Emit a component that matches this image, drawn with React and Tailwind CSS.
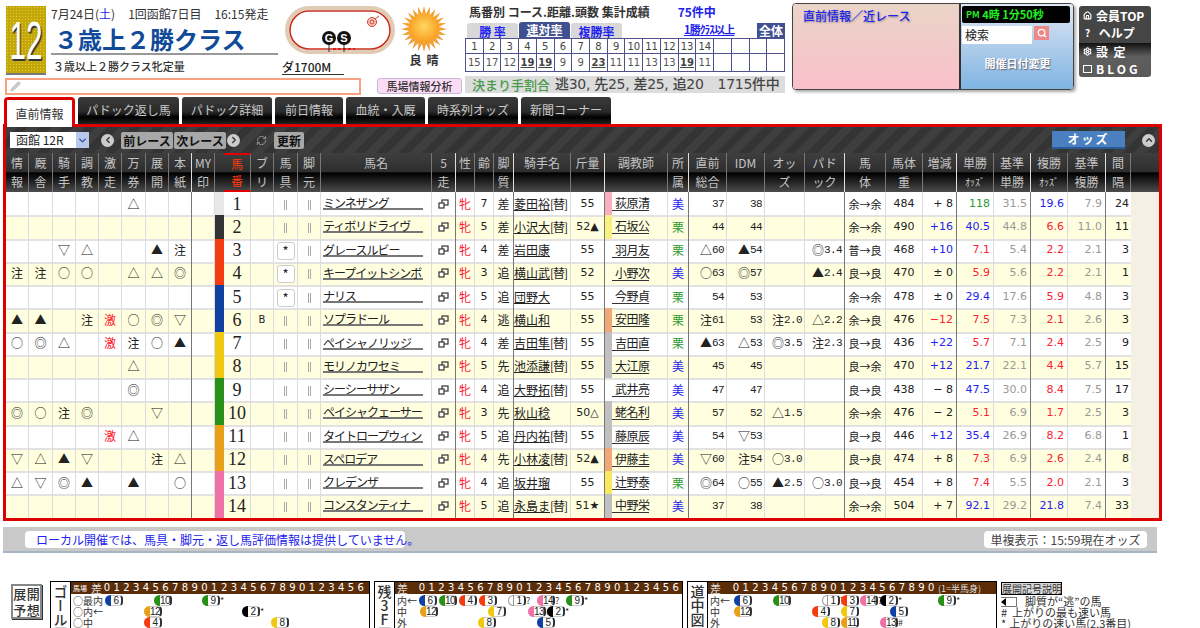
import { Search, Home, Settings, RefreshCw, ChevronLeft, ChevronRight, ChevronUp, ChevronDown, Pencil } from 'lucide-react';

const COLS = 'grid grid-cols-[23px_24px_23px_23px_23px_24px_23px_23px_23px_9px_27px_23px_24px_23px_111px_24px_19px_19px_20px_57px_34px_63px_21px_38px_38px_40px_40px_41px_37px_34px_37px_37px_37px_38px_25px_1fr]';
const NUM = "[font-family:'DejaVu_Sans',sans-serif]";
const MONO = "[font-family:'Liberation_Mono',monospace] text-[11px] tracking-[-0.6px]";

const HEADERS = [
  ['情', '報'], ['厩', '舎'], ['騎', '手'], ['調', '教'], ['激', '走'], ['万', '券'], ['展', '開'], ['本', '紙'], ['MY', '印'], ['', ''],
  ['馬', '番'], ['ブ', 'リ'], ['馬', '具'], ['脚', '元'], ['馬名', ''], ['5', '走'], ['性', ''], ['齢', ''], ['脚', '質'], ['騎手名', ''], ['斤量', ''],
  ['調教師', ''], ['所', '属'], ['直前', '総合'], ['IDM', ''], ['オッ', 'ズ'], ['パド', 'ック'], ['馬', '体'], ['馬体', '重'], ['増減', ''],
  ['単勝', 'ｵｯｽﾞ'], ['基準', '単勝'], ['複勝', 'ｵｯｽﾞ'], ['基準', '複勝'], ['間', '隔'], ['', ''],
];
const DARK = [7, 15, 18, 20, 22, 26, 29, 31, 33];
const FRAMES = ['bg-[#e8e8e8]', 'bg-[#333333]', 'bg-[#f43c10]', 'bg-[#f43c10]', 'bg-[#1040a0]', 'bg-[#1040a0]', 'bg-[#f0c810]', 'bg-[#f0c810]', 'bg-[#289018]', 'bg-[#289018]', 'bg-[#e8a018]', 'bg-[#e8a018]', 'bg-[#f070a8]', 'bg-[#f070a8]'];
const BARS = ['bg-[#f8b0c0]', 'bg-[#f8f080]', '', '', '', 'bg-[#f0a878]', 'bg-[#c0c0c0]', 'bg-[#c0c0c0]', '', 'bg-[#c0c0c0]', 'bg-[#c0c0c0]', 'bg-[#f0a878]', 'bg-[#f8e860]', 'bg-[#c0c0c0]'];

const HORSES = [
  { marks: ['', '', '', '', '', '△', '', ''], name: 'ミンネザング', age: 7, leg: '差', jockey: '菱田裕', sub: 1, kin: '55', trainer: '荻原清', home: '美', total: '37', idm: '38', odds: '', pad: '', body: '余→余', weight: 484, diff: '+ 8', dc: 'k', win: '118', wc: 'g', bw: '31.5', place: '19.6', pc: 'b', bp: '7.9', gap: 24 },
  { marks: ['', '', '', '', '', '', '', ''], name: 'ティボリドライヴ', age: 5, leg: '差', jockey: '小沢大', sub: 1, kin: '52▲', trainer: '石坂公', home: '栗', total: '44', idm: '44', odds: '', pad: '', body: '余→余', weight: 490, diff: '+16', dc: 'b', win: '40.5', wc: 'b', bw: '44.8', place: '6.6', pc: 'r', bp: '11.0', gap: 11 },
  { marks: ['', '', '▽', '△', '', '', '▲', '注'], name: 'グレースルビー', age: 4, leg: '差', jockey: '岩田康', kin: '55', trainer: '羽月友', home: '栗', total: '△60', idm: '▲54', odds: '', pad: '◎3.4', body: '普→良', weight: 468, diff: '+10', dc: 'b', win: '7.1', wc: 'r', bw: '5.4', place: '2.2', pc: 'r', bp: '2.1', gap: 3, gear: 1 },
  { marks: ['注', '注', '○', '○', '', '△', '△', '◎'], name: 'キープイットシンボ', age: 3, leg: '追', jockey: '横山武', sub: 1, kin: '52', trainer: '小野次', home: '美', total: '○63', idm: '◎57', odds: '', pad: '▲2.4', body: '良→良', weight: 470, diff: '± 0', dc: 'k', win: '5.9', wc: 'r', bw: '5.6', place: '2.2', pc: 'r', bp: '2.1', gap: 1, gear: 1 },
  { marks: ['', '', '', '', '', '', '', ''], name: 'ナリス', age: 5, leg: '追', jockey: '団野大', kin: '55', trainer: '今野貞', home: '栗', total: '54', idm: '53', odds: '', pad: '', body: '余→余', weight: 478, diff: '± 0', dc: 'k', win: '29.4', wc: 'b', bw: '17.6', place: '5.9', pc: 'r', bp: '4.8', gap: 3, gear: 1 },
  { marks: ['▲', '▲', '', '注', '激', '○', '◎', '▽'], name: 'ソプラドール', age: 4, leg: '逃', jockey: '横山和', kin: '55', trainer: '安田隆', home: '栗', total: '注61', idm: '53', odds: '注2.0', pad: '△2.2', body: '余→良', weight: 476, diff: '−12', dc: 'r', win: '7.5', wc: 'r', bw: '7.3', place: '2.1', pc: 'r', bp: '2.6', gap: 3, blink: 'B' },
  { marks: ['○', '◎', '△', '', '激', '注', '○', '▲'], name: 'ペイシャノリッジ', age: 4, leg: '差', jockey: '吉田隼', sub: 1, kin: '55', trainer: '吉田直', home: '栗', total: '▲63', idm: '△53', odds: '◎3.5', pad: '注2.3', body: '良→良', weight: 436, diff: '+22', dc: 'b', win: '5.7', wc: 'r', bw: '7.1', place: '2.4', pc: 'r', bp: '2.5', gap: 9 },
  { marks: ['', '', '', '', '', '△', '', ''], name: 'モリノカワセミ', age: 5, leg: '先', jockey: '池添謙', sub: 1, kin: '55', trainer: '大江原', home: '美', total: '45', idm: '45', odds: '', pad: '', body: '良→余', weight: 470, diff: '+12', dc: 'b', win: '21.7', wc: 'b', bw: '22.1', place: '4.4', pc: 'r', bp: '5.7', gap: 15 },
  { marks: ['', '', '', '', '', '◎', '', ''], name: 'シーシーサザン', age: 4, leg: '追', jockey: '大野拓', sub: 1, kin: '55', trainer: '武井亮', home: '美', total: '47', idm: '47', odds: '', pad: '', body: '良→良', weight: 438, diff: '− 8', dc: 'k', win: '47.5', wc: 'b', bw: '30.0', place: '8.4', pc: 'r', bp: '7.5', gap: 17 },
  { marks: ['◎', '○', '注', '◎', '', '', '▽', ''], name: 'ペイシャクェーサー', age: 3, leg: '先', jockey: '秋山稔', kin: '50△', trainer: '蛯名利', home: '美', total: '57', idm: '52', odds: '△1.5', pad: '', body: '余→余', weight: 476, diff: '− 2', dc: 'k', win: '5.1', wc: 'r', bw: '6.9', place: '1.7', pc: 'r', bp: '2.5', gap: 3 },
  { marks: ['', '', '', '', '激', '△', '', ''], name: 'タイトロープウィン', age: 5, leg: '追', jockey: '丹内祐', sub: 1, kin: '55', trainer: '藤原辰', home: '美', total: '54', idm: '▽53', odds: '', pad: '', body: '良→良', weight: 446, diff: '+12', dc: 'b', win: '35.4', wc: 'b', bw: '26.9', place: '8.2', pc: 'r', bp: '6.8', gap: 1 },
  { marks: ['▽', '△', '▲', '▽', '', '', '注', '△'], name: 'スペロデア', age: 4, leg: '先', jockey: '小林凌', sub: 1, kin: '52▲', trainer: '伊藤圭', home: '美', total: '▽60', idm: '注54', odds: '○3.0', pad: '', body: '良→良', weight: 474, diff: '+ 8', dc: 'k', win: '7.3', wc: 'r', bw: '6.9', place: '2.6', pc: 'r', bp: '2.4', gap: 8 },
  { marks: ['△', '▽', '◎', '▲', '', '▲', '', '○'], name: 'クレデンザ', age: 4, leg: '追', jockey: '坂井瑠', kin: '55', trainer: '辻野泰', home: '栗', total: '◎64', idm: '○55', odds: '▲2.5', pad: '○3.0', body: '良→良', weight: 454, diff: '+ 8', dc: 'k', win: '7.4', wc: 'r', bw: '5.5', place: '2.0', pc: 'r', bp: '2.1', gap: 3 },
  { marks: ['', '', '', '', '', '', '', ''], name: 'コンスタンティナ', age: 5, leg: '追', jockey: '永島ま', sub: 1, kin: '51★', trainer: '中野栄', home: '美', total: '37', idm: '38', odds: '', pad: '', body: '余→余', weight: 504, diff: '+ 7', dc: 'k', win: '92.1', wc: 'b', bw: '29.2', place: '21.8', pc: 'b', bp: '7.4', gap: 33 },
];
const TONE = { k: 'text-[#222]', b: 'text-[#2222ee]', r: 'text-[#ff2030]', g: 'text-[#2f9a2f]' };

function WindowIcon() {
  return (
    <svg width="11" height="10" viewBox="0 0 11 10" fill="none" stroke="#333" strokeWidth="1.2">
      <rect x="4" y="1" width="6" height="5" />
      <rect x="1" y="4" width="5" height="5" fill="#fff" />
    </svg>
  );
}

function Bars() {
  return <span className="w-[3px] h-[10px] border-x border-[#aaa]" />;
}

// the mark in front of a figure is a full-size CJK glyph, the figure stays narrow
function Figure({ v }) {
  if (!v) return null;
  const mark = /^[0-9]/.test(v) ? '' : v[0];
  return (
    <>
      {mark && <span className="text-[12px] tracking-normal [font-family:'Noto_Sans_CJK_JP',sans-serif]">{mark}</span>}
      <span className={MONO}>{mark ? v.slice(1) : v}</span>
    </>
  );
}

function Cell({ i, className = '', children }) {
  const edge = DARK.includes(i) ? 'border-r-[#777]' : 'border-r-[#dcdcdc]';
  return (
    <div className={`flex items-center border-r border-b-2 border-b-[#e2e2e2] min-w-0 ${edge} ${className}`}>
      {children}
    </div>
  );
}

function Row({ h, n }) {
  const bg = n % 2 === 0 ? 'bg-[#ffffdf]' : 'bg-white';
  return (
    <div className={`${COLS} h-[23.25px] text-[12px] leading-[14px] text-[#222] ${bg}`}>
      {h.marks.map((m, i) => (
        <Cell key={i} i={i} className={`justify-center ${m === '激' ? 'text-[#ff2030]' : ''}`}>{m}</Cell>
      ))}
      <Cell i={8} />
      <div className={FRAMES[n - 1]} />
      <Cell i={10} className="justify-center text-[18px] leading-[18px] [font-family:'Liberation_Serif',serif]">{n}</Cell>
      <Cell i={11} className={`justify-center text-[10px] ${NUM}`}>{h.blink}</Cell>
      <Cell i={12} className="justify-center pt-[2px]">
        {h.gear ? (
          <span className="w-[18px] h-[18px] bg-white border border-[#ccc] rounded-[3px] flex items-center justify-center text-[13px]">*</span>
        ) : <Bars />}
      </Cell>
      <Cell i={13} className="justify-center pt-[2px]"><Bars /></Cell>
      <Cell i={14} className="pl-[2px] !items-start">
        <span className="w-[100px] h-[18px] border-b-2 border-[#777] leading-[21px] text-[12px] tracking-[-1px] whitespace-nowrap">{h.name}</span>
      </Cell>
      <Cell i={15} className="justify-center"><WindowIcon /></Cell>
      <Cell i={16} className="justify-center text-[#ff2030]">牝</Cell>
      <Cell i={17} className={`justify-center text-[11px] ${NUM}`}>{h.age}</Cell>
      <Cell i={18} className="justify-center">{h.leg}</Cell>
      <Cell i={19} className="whitespace-nowrap">
        <span className="underline">{h.jockey}</span>{h.sub ? <span className="tracking-[-1px]">[替]</span> : null}
      </Cell>
      <Cell i={20} className={`justify-center text-[11px] ${NUM}`}>{h.kin}</Cell>
      <Cell i={21} className="!items-start">
        <div className={`w-[7px] h-[23.25px] shrink-0 ${BARS[n - 1]}`} />
        <span className="mt-[1px] w-[37px] h-[18px] leading-[19px] border-b border-[#333] pl-[3px] whitespace-nowrap text-[12px] tracking-[-0.5px]">{h.trainer}</span>
      </Cell>
      <Cell i={22} className={`justify-center ${h.home === '美' ? 'text-[#2222ee]' : 'text-[#2f9a2f]'}`}>{h.home}</Cell>
      <Cell i={23} className="justify-end pr-[2px]"><Figure v={h.total} /></Cell>
      <Cell i={24} className="justify-end pr-[2px]"><Figure v={h.idm} /></Cell>
      <Cell i={25} className="justify-end pr-[2px]"><Figure v={h.odds} /></Cell>
      <Cell i={26} className="justify-end pr-[2px]"><Figure v={h.pad} /></Cell>
      <Cell i={27} className="justify-center text-[11px] whitespace-nowrap">{h.body}</Cell>
      <Cell i={28} className={`justify-center text-[11px] ${NUM}`}>{h.weight}</Cell>
      <Cell i={29} className={`justify-end pr-[3px] text-[11px] whitespace-pre ${NUM} ${TONE[h.dc]}`}>{h.diff}</Cell>
      <Cell i={30} className={`justify-end pr-[3px] text-[11px] ${NUM} ${TONE[h.wc]}`}>{h.win}</Cell>
      <Cell i={31} className={`justify-end pr-[3px] text-[11px] text-[#999] ${NUM}`}>{h.bw}</Cell>
      <Cell i={32} className={`justify-end pr-[3px] text-[11px] ${NUM} ${TONE[h.pc]}`}>{h.place}</Cell>
      <Cell i={33} className={`justify-end pr-[3px] text-[11px] text-[#999] ${NUM}`}>{h.bp}</Cell>
      <div className={`flex items-center justify-end pr-[2px] text-[11px] border-b-2 border-b-[#e2e2e2] ${NUM}`}>{h.gap}</div>
      <div className="bg-[#f4f1e4]" />
    </div>
  );
}

function HeaderRow() {
  return (
    <div className={`${COLS} h-[39px] text-[12px] leading-[19px] text-[#c4c4c4] bg-[linear-gradient(#3e3e3e_0,#2e2e2e_48%,#000_51%,#4c4c4c_100%)]`}>
      {HEADERS.map(([a, b], i) => {
        const edge = DARK.includes(i) ? 'border-r-[#ddd]' : i === 9 ? 'border-r-transparent' : 'border-r-[#777]';
        const hot = i === 10 ? 'text-[#ff3a10] border-y-2 border-[#e00000]' : '';
        return (
          <div key={i} className={`flex flex-col items-center border-r whitespace-nowrap ${edge} ${hot} ${i === 35 ? 'border-r-0' : ''}`}>
            <span className={i === 10 ? 'h-[17px] leading-[17px]' : 'h-[19px]'}>{a}</span>
            <span className={`${i === 10 ? 'h-[17px] leading-[17px]' : 'h-[19px]'} ${b === 'ｵｯｽﾞ' ? 'text-[10px] text-[#ccc]' : ''}`}>{b}</span>
          </div>
        );
      })}
    </div>
  );
}

function Toolbar() {
  const btn = 'h-[17px] bg-[#a8a8a8] rounded-[2px] text-[12px] leading-[17px] text-center text-[#111] font-bold whitespace-nowrap';
  const round = 'w-[13px] h-[13px] rounded-full bg-[#ccc] flex items-center justify-center text-[#333]';
  return (
    <div className="h-[26px] flex items-center pl-[4px] bg-[repeating-linear-gradient(135deg,#3e3e3e_0,#3e3e3e_8px,#343434_8px,#343434_16px)]">
      <div className="w-[79px] h-[16px] bg-white flex items-center justify-between pl-[6px] text-[12px] text-[#222]">
        函館 12R
        <span className="w-[13px] h-full bg-[#b8c8ec] flex items-center justify-center text-[#3050a0]"><ChevronDown size={11} strokeWidth={3} /></span>
      </div>
      <span className={`ml-[12px] ${round}`}><ChevronLeft size={10} strokeWidth={3} /></span>
      <span className={`ml-[7px] w-[52px] ${btn}`}>前レース</span>
      <span className={`ml-[1px] w-[52px] ${btn}`}>次レース</span>
      <span className={`ml-[1px] ${round}`}><ChevronRight size={10} strokeWidth={3} /></span>
      <RefreshCw size={11} className="ml-[16px] text-[#999]" />
      <span className={`ml-[7px] w-[30px] ${btn}`}>更新</span>
      <div className="ml-auto w-[73px] h-[18px] bg-[#4a80c0] border-b-2 border-[#2a5a98] text-white text-[12px] font-bold leading-[16px] text-center tracking-[2px]">オッズ</div>
      <span className={`ml-[17px] mr-[4px] ${round}`}><ChevronUp size={10} strokeWidth={3} /></span>
    </div>
  );
}

const TABS = [
  ['パドック返し馬', 'w-[101px]'],
  ['パドック詳細', 'w-[90px]'],
  ['前日情報', 'w-[68px]'],
  ['血統・入厩', 'w-[79px]'],
  ['時系列オッズ', 'w-[90px]'],
  ['新聞コーナー', 'w-[90px]'],
];

function Tabs() {
  return (
    <div className="h-[27px] flex items-start pl-[4px] gap-[3px]">
      <div className="relative z-10 w-[71px] h-[30px] bg-white border-[3px] border-b-0 border-[#dd0000] rounded-t-[4px] text-[12px] text-[#333] text-center leading-[28px]">直前情報</div>
      {TABS.map(([t, w]) => (
        <div key={t} className={`${w} h-[27px] rounded-t-[3px] bg-[linear-gradient(#3a3a3a_0,#2a2a2a_55%,#000_75%,#222_100%)] text-[#c8c8c8] text-[12px] text-center leading-[26px]`}>{t}</div>
      ))}
    </div>
  );
}

function Sun() {
  const pts = [];
  for (let i = 0; i < 48; i++) {
    const r = i % 2 === 0 ? 23 : 15;
    const a = (i / 48) * Math.PI * 2;
    pts.push(`${(23 + r * Math.cos(a)).toFixed(1)},${(23 + r * Math.sin(a)).toFixed(1)}`);
  }
  return (
    <svg width="46" height="46" viewBox="0 0 46 46">
      <defs>
        <radialGradient id="sun" cx="50%" cy="45%" r="55%">
          <stop offset="0%" stopColor="#ffd860" />
          <stop offset="55%" stopColor="#f8a428" />
          <stop offset="100%" stopColor="#e09a50" />
        </radialGradient>
      </defs>
      <polygon points={pts.join(' ')} fill="url(#sun)" />
    </svg>
  );
}

function Track() {
  return (
    <svg width="110" height="50" viewBox="0 0 110 50" className="shrink-0">
      <rect x="2" y="2" width="106" height="44" rx="22" fill="#fff" stroke="#e0ccb4" strokeWidth="4" />
      <rect x="5" y="5" width="100" height="38" rx="19" fill="#fff" stroke="#c83020" strokeWidth="1.6" />
      <line x1="48" y1="43" x2="70" y2="43" stroke="#e02020" strokeWidth="2" strokeDasharray="3 2" />
      <line x1="44" y1="38" x2="44" y2="46" stroke="#333" />
      <line x1="59" y1="38" x2="59" y2="46" stroke="#333" />
      <circle cx="44" cy="32" r="7" fill="#111" />
      <circle cx="59" cy="32" r="7" fill="#111" />
      <text x="44" y="36" textAnchor="middle" fontSize="11" fontWeight="700" fill="#fff" fontFamily="Liberation Sans">G</text>
      <text x="59" y="36" textAnchor="middle" fontSize="11" fontWeight="700" fill="#fff" fontFamily="Liberation Sans">S</text>
      <circle cx="87" cy="16" r="4.5" fill="#f8c8c0" stroke="#d04030" />
      <circle cx="87" cy="16" r="2" fill="none" stroke="#d04030" />
      <line x1="90" y1="13" x2="94" y2="10" stroke="#d04030" />
    </svg>
  );
}

const WIN_ROW = [15, 17, 12, 19, 19, 9, 9, 23, 11, 11, 13, 13, 19, 11];
const HOT = [3, 4, 7, 12];

function Stats() {
  const tabOff = 'w-[51px] h-[15px] bg-[#d8d8d8] rounded-t-[3px] text-center text-[12px] font-bold leading-[17px] text-[#2222ee] underline';
  const blank = Array.from({ length: 4 });
  const box = 'border-r border-b border-[#50508c] flex items-center justify-center';
  return (
    <div className="w-[320px] flex flex-col shrink-0">
      <div className="h-[23px] flex items-center pl-[4px] text-[12px] font-bold text-[#333]">
        馬番別 コース.距離.頭数 集計成績
        <span className="ml-[28px] text-[#2222ee]">75件中</span>
      </div>
      <div className="h-[15px] flex items-end pl-[2px] gap-[1px]">
        <div className={tabOff}>勝 率</div>
        <div className="w-[51px] h-[16px] bg-[#405090] rounded-t-[3px] text-center text-[12px] font-bold leading-[16px] text-white underline">連対率</div>
        <div className={tabOff}>複勝率</div>
        <span className="ml-[61px] text-[11px] font-bold leading-[15px] text-[#2222ee] underline tracking-[-0.8px] whitespace-nowrap -translate-y-[1px]">1勝ｸﾗｽ以上</span>
        <span className="ml-auto w-[28px] h-[15px] bg-[#405090] text-white text-[12px] font-bold leading-[15px] text-center">全体</span>
      </div>
      <div className="grid grid-cols-[repeat(18,1fr)] grid-rows-[15px_18px] border-l border-t border-[#50508c] bg-white">
        {WIN_ROW.map((_, i) => <div key={i} className={`${box} text-[10px] text-[#444] ${NUM}`}>{i + 1}</div>)}
        {blank.map((_, i) => <div key={i} className={box} />)}
        {WIN_ROW.map((v, i) => (
          <div key={i} className={`${box} text-[10px] ${NUM} ${HOT.includes(i) ? 'font-bold underline text-[#444]' : 'text-[#555]'}`}>{v}</div>
        ))}
        {blank.map((_, i) => <div key={i} className={box} />)}
      </div>
      <div className="mt-[4px] h-[17px] bg-[#dcdcdc] flex items-center pl-[7px] text-[14px] font-medium whitespace-nowrap text-[#444] [font-family:'DejaVu_Sans','Noto_Sans_CJK_JP',sans-serif]">
        <span className="text-[13px] text-[#4a9a4a] [font-family:'Noto_Sans_CJK_JP',sans-serif]">決まり手割合</span>
        <span className="ml-[5px] tracking-[-0.3px]">逃30, 先25, 差25, 追20</span>
        <span className="ml-[14px] tracking-[-0.3px]">1715件中</span>
      </div>
    </div>
  );
}

function PinkPanel() {
  return (
    <div className="ml-[7px] mt-[3px] w-[282px] h-[87px] flex border border-[#444] rounded-[4px] overflow-hidden shadow-[2px_2px_3px_#aaa] shrink-0">
      <div className="w-[168px] bg-[linear-gradient(#ead4c8,#fac0ca)] border-r-2 border-[#333] pl-[10px] pt-[3px] text-[12px] font-medium text-[#2222ee] [text-shadow:1px_1px_2px_#888]">直前情報／近レース</div>
      <div className="flex-1 bg-[linear-gradient(#dfe6f4,#7fb4e2)] flex flex-col pl-[1px]">
        <div className="mt-[2px] w-[108px] h-[17px] bg-black rounded-[2px] text-[#22ee22] text-[11px] font-bold leading-[17px] pl-[4px] whitespace-pre">
          <span className="text-[9px] align-top">PM</span> 4時 1分50秒
        </div>
        <div className="mt-[3px] flex items-start">
          <div className="w-[70px] h-[18px] bg-white text-[12px] leading-[18px] pl-[3px] text-[#222]">検索</div>
          <span className="ml-[2px] w-[15px] h-[14px] bg-[#ee8888] flex items-center justify-center text-white"><Search size={10} strokeWidth={3} /></span>
        </div>
        <div className="mt-[11px] text-center text-[11px] font-bold text-white [text-shadow:1px_1px_1px_#667]">開催日付変更</div>
      </div>
    </div>
  );
}

function NavBox() {
  const row = 'h-[17px] flex items-center gap-[4px] pl-[4px] text-[12px] font-bold text-white whitespace-pre';
  return (
    <div className="ml-[5px] mt-[6px] w-[72px] h-[71px] rounded-[3px] overflow-hidden shrink-0 flex flex-col">
      <div className="h-[37px] bg-[#454545] pt-[1px]">
        <div className={row}><Home size={9} strokeWidth={3} />会員TOP</div>
        <div className={row}><span className="w-[9px] text-center text-[10px]">?</span> ヘルプ</div>
      </div>
      <div className="flex-1 bg-[linear-gradient(#111,#5e5e5e_40%,#5a5a5a)]">
        <div className={row}><Settings size={9} strokeWidth={3} />設  定</div>
        <div className={`${row} tracking-[3px]`}><span className="w-[9px] h-[8px] border border-white" />BLOG</div>
      </div>
    </div>
  );
}

function TopBar() {
  return (
    <div className="flex h-[97px] w-full">
      <div className="w-[465px] shrink-0 flex flex-col">
        <div className="h-[78px] flex pt-[6px] pl-[6px]">
          <div className="w-[40px] h-[69px] bg-[#c4a80a] bg-[radial-gradient(#e2cb40_1px,transparent_1px)] bg-[length:3px_3px] border-b-2 border-[#777] flex items-center justify-center overflow-hidden">
            <span className="text-white text-[54px] leading-none scale-x-[0.55] [font-family:'Liberation_Sans',sans-serif] [text-shadow:2px_2px_1px_#333]">12</span>
          </div>
          <div className="ml-[5px] w-[227px]">
            <div className="flex gap-[13px] text-[12px] leading-[15px] whitespace-nowrap text-[#333]">
              <span>7月24日(<span className="text-[#2222ee]">土</span>)</span>
              <span>1回函館7日目</span>
              <span>16:15発走</span>
            </div>
            <div className="mt-[3px] pl-[3px] h-[31px] border-b-2 border-[#999] text-[24px] font-bold leading-[30px] text-[#104a98] whitespace-nowrap">３歳上２勝クラス</div>
            <div className="mt-[4px] pl-[2px] text-[11px] font-medium leading-[14px] text-[#333] whitespace-nowrap">３歳以上２勝クラス牝定量</div>
          </div>
          <div className="ml-[7px] w-[110px] flex flex-col">
            <Track />
            <div className="mt-[4px] -ml-[3px] w-[62px] border-b border-[#333] text-[12px] font-medium leading-[14px] text-[#222] whitespace-nowrap">ダ1700M</div>
          </div>
          <div className="ml-[6px] w-[46px] flex flex-col items-center">
            <Sun />
            <div className="mt-[1px] text-[12px] font-bold leading-[14px] tracking-[5px] pl-[5px] text-[#333] whitespace-nowrap">良晴</div>
          </div>
        </div>
        <div className="flex items-start pl-[5px]">
          <div className="w-[356px] h-[17px] border-2 border-[#f8a080] flex items-center pl-[3px] text-[#bbb]"><Pencil size={11} fill="#ccc" /></div>
          <div className="ml-[16px] w-[85px] h-[16px] bg-[#fbdcf4] border border-[#c8b8d8] rounded-[3px] text-[11px] font-medium leading-[15px] text-center text-[#333] whitespace-nowrap">馬場情報分析</div>
        </div>
      </div>
      <Stats />
      <PinkPanel />
      <NavBox />
    </div>
  );
}

function Notice() {
  return (
    <div className="mt-[6px] ml-[3px] w-[1154px] h-[26px] bg-[#c9c9c9] border-b-2 border-[#a8b4c4] flex items-start justify-between pl-[22px] pr-[10px] pt-[4px]">
      <div className="w-[380px] h-[17px] bg-white rounded-[4px] text-[12px] leading-[17px] text-[#2222ee] pl-[11px] whitespace-nowrap">ローカル開催では、馬具・脚元・返し馬評価情報は提供していません。</div>
      <div className="w-[163px] h-[17px] bg-white rounded-[4px] text-[12px] leading-[17px] text-[#444] text-center whitespace-nowrap">単複表示：15:59現在オッズ</div>
    </div>
  );
}

const PILL_COLOR = { w: 'bg-white border border-[#999]', k: 'bg-black', r: 'bg-[#f43c10]', b: 'bg-[#1040a0]', y: 'bg-[#f0c810]', g: 'bg-[#289018]', o: 'bg-[#e8a018]', p: 'bg-[#f070a8]' };

function Pill({ x, y, n, c, s }) {
  return (
    <div className="absolute flex items-center h-[11px]" style={{ left: x, top: y }}>
      <span className={`w-[6px] h-[11px] rounded-l-full ${PILL_COLOR[c]}`} />
      <span className="w-[12px] h-[11px] bg-white border-r-2 border-y border-y-[#ccc] border-r-[#333] rounded-r-[4px] text-[10px] leading-[9px] text-center tracking-[-0.5px] text-[#222] [font-family:'Liberation_Sans',sans-serif]">{n}</span>
      {s && <span className="text-[9px] text-[#333] leading-[10px]">{s}</span>}
    </div>
  );
}

function Chart({ w, title, labels, head, digits, after, pills, small }) {
  const nums = Array.from({ length: digits }, (_, i) => i % 10);
  return (
    <div className={`${w} h-[60px] border border-black flex shrink-0 bg-white`}>
      <div className="w-[20px] border-r border-black flex justify-center pt-[3px] shrink-0">
        <span className="[writing-mode:vertical-rl] [text-orientation:upright] text-[14px] leading-[18px] font-medium text-[#333] whitespace-nowrap">{title}</span>
      </div>
      <div className="flex-1 min-w-0">
        <div className="h-[12px] bg-[#5a2d08] flex items-center pl-[2px] text-white text-[10px] leading-none whitespace-nowrap overflow-hidden">
          {small && <span className="text-[7px] mr-[4px]">{small}</span>}
          <span className={`${head} text-[11px] text-[#ddd]`}>差</span>
          {nums.map((d, i) => <span key={i} className={`w-[9.77px] text-center shrink-0 ${NUM}`}>{d}</span>)}
          {after && <span className="ml-[2px] text-[9px] text-[#ddd]">{after}</span>}
        </div>
        <div className="relative h-[48px]">
          <div className="flex flex-col pl-[2px] pt-[1px] text-[10px] leading-[11px] text-[#333] whitespace-nowrap">
            {labels.map((l) => <span key={l}>{l}</span>)}
          </div>
          {pills.map((p, i) => <Pill key={i} x={p[0]} y={p[1]} n={p[2]} c={p[3]} s={p[4]} />)}
        </div>
      </div>
    </div>
  );
}

const PILLS1 = [
  [34, 1, 6, 'b'], [83, 1, 10, 'g'], [131, 1, 9, 'g', '*'],
  [73, 12, 12, 'o'], [171, 12, 2, 'k', '*'],
  [73, 23, 4, 'r'], [200, 23, 8, 'y'],
  [66, 34, 5, 'b'], [134, 34, 3, 'r'], [174, 34, 7, 'y'],
];
const PILLS2 = [
  [24, 1, 6, 'b'], [44, 1, 10, 'g'], [64, 1, 4, 'r'], [84, 1, 3, 'r'], [113, 1, 1, 'w', '?'], [142, 1, 14, 'p', '?'], [171, 1, 9, 'g', '*'],
  [25, 12, 12, 'o'], [93, 12, 7, 'y'], [133, 12, 13, 'p', '#'], [152, 12, 2, 'k', '*'],
  [83, 23, 8, 'y'], [142, 23, 5, 'b'],
];
const PILLS3 = [
  [26, 1, 6, 'b'], [65, 1, 10, 'g'], [114, 1, 1, 'w', '?'], [133, 1, 3, 'r'], [152, 1, 14, 'p', '?'], [172, 1, 2, 'k', '*'], [230, 1, 9, 'g', '*'],
  [26, 12, 12, 'o'], [104, 12, 4, 'r'], [133, 12, 7, 'y'], [182, 12, 5, 'b'],
  [114, 23, 8, 'y'], [133, 23, 11, 'o'], [172, 23, 13, 'p', '#'],
];

function Charts() {
  return (
    <div className="mt-[28px] ml-[11px] flex items-start">
      <div className="mt-[3px] w-[31px] h-[35px] bg-white border-2 border-[#888] shadow-[1px_1px_0_#333] grid grid-cols-2 text-[13px] leading-[15px] font-medium text-[#333] text-center shrink-0">
        <span>展</span><span>開</span><span>予</span><span>想</span>
      </div>
      <div className="ml-[8px]">
        <Chart w="w-[320px]" title="ゴール図" labels={['○最内', '○内←', '○中']} head="" small="馬場" digits={27} pills={PILLS1} />
      </div>
      <div className="ml-[4px]">
        <Chart w="w-[309px]" title="残3F図" labels={['内←', '中', '外']} head="mr-[9px]" digits={27} pills={PILLS2} />
      </div>
      <div className="ml-[4px]">
        <Chart w="w-[310px]" title="道中図" labels={['内←', '中', '外']} head="mr-[10px]" digits={21} after="(1=半馬身)" pills={PILLS3} />
      </div>
      <div className="ml-[4px] w-[130px] text-[11px] leading-[11px] text-[#333] whitespace-nowrap">
        <div className="mt-[1px] w-[61px] h-[13px] bg-[#d8d8d8] border border-black text-[10px] leading-[11px] text-center">展開記号説明</div>
        <div className="mt-[1px] flex items-center h-[11px]">
          <span className="w-[16px] h-[10px] border-y border-r border-[#777] relative"><span className="absolute left-0 top-0 border-y-[4px] border-y-transparent border-r-[5px] border-r-black" /></span>
          <span className="ml-[8px]">脚質が“逃”の馬</span>
        </div>
        <div className="flex"><span className="w-[11px]">#</span>上がりの最も速い馬</div>
        <div className="flex"><span className="w-[11px]">*</span>上がりの速い馬(2,3番目)</div>
      </div>
    </div>
  );
}

export default function App() {
  return (
    <div className="w-[1200px] h-[628px] overflow-hidden bg-white text-[#222] [font-family:'Noto_Sans_CJK_JP',sans-serif]">
      <TopBar />
      <Tabs />
      <div className="ml-[3px] w-[1159px] h-[397px] border-[3px] border-[#dd0000] bg-[#f4f1e4] overflow-hidden">
        <Toolbar />
        <HeaderRow />
        {HORSES.map((h, i) => <Row key={i} h={h} n={i + 1} />)}
      </div>
      <Notice />
      <Charts />
    </div>
  );
}
